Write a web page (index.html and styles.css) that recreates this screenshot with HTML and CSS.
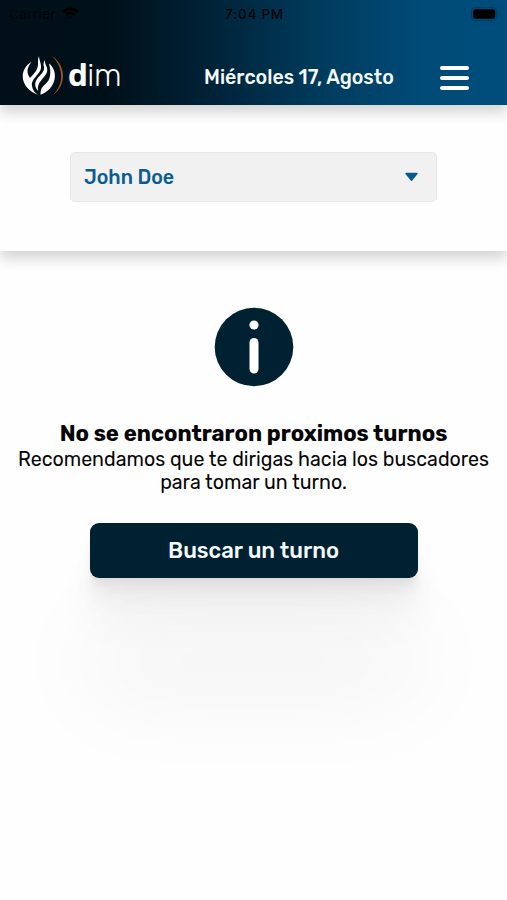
FILE: index.html
```html
<!DOCTYPE html>
<html lang="es">
<head>
<meta charset="utf-8">
<title>dim - Turnos</title>
<link rel="stylesheet" href="styles.css">
</head>
<body>
<header class="header">
  <div class="status">
    <div class="carrier"><span>Carrier</span>
      <svg width="17" height="13" viewBox="0 0 17 13"><path d="M.5 4C5-.8 12-.8 16.500 4L14.700 5.900C11 2.200 6 2.200 2.300 5.900ZM3.400 7C6.300 4 10.700 4 13.600 7L11.800 8.900C9.800 7 7.200 7 5.200 8.900ZM6.200 10C7.500 8.700 9.500 8.700 10.800 10L8.500 12.400Z"/></svg>
    </div>
    <time class="clock">7:04 PM</time>
    <svg class="battery" width="29" height="14" viewBox="0 0 29 14"><rect x=".6" y=".6" width="25" height="12.800" rx="4" fill="none" stroke="#003d63" stroke-width="1.200"/><rect x="2.200" y="2.200" width="22" height="9.600" rx="2.300"/><path d="M27 5Q29 7 27 9Z" fill="#003d63"/></svg>
  </div>
  <div class="bar">
    <div class="logo">
      <svg width="42" height="42" viewBox="0 0 42 42">
        <g fill="#fff">
          <path d="M9.500 7C4.500 13 4.500 18 8 23C11.500 19 16.500 15 16 8Q15.500 4 17 1C17 6 20.500 10 18.500 15C16.500 20 8.500 25 10 31C10.500 35 13 38 16 39.700C8 37 .5 30 .7 21C1 15 4 10 9.500 7Z"/>
          <path d="M23 5C22 9 26.500 12 25 17C23 23 14.500 27 16 36C11 30 13.500 25 17.500 21C21.500 17 23 14 21.500 10Q21 7 23 5Z"/>
          <path d="M27 8.500C36 15 36 33 18.500 39.800C18.500 34 20 32 23.500 29C28.500 25 29.500 18 27 8.500Z"/>
        </g>
        <path d="M30 1C45 11 44 31 31 40C42 29 42 13 30 1Z" fill="#9a541c"/>
      </svg>
      <span class="wordmark"><b>d</b>im</span>
    </div>
    <h1 class="date">Miércoles 17, Agosto</h1>
    <button class="menu" aria-label="Menú"><i></i><i></i><i></i></button>
  </div>
</header>
<section class="picker">
  <button class="select"><span>John Doe</span>
    <svg width="15" height="10" viewBox="0 0 15 10"><path d="M2 1.500H13L7.500 8.300Z" fill="#075b91" stroke="#075b91" stroke-width="1.400" stroke-linejoin="round"/></svg>
  </button>
</section>
<main class="content">
  <svg class="info" width="80" height="80" viewBox="0 0 80 80"><circle cx="40" cy="40" r="39.300" fill="#002132"/><circle cx="40" cy="18" r="4.600" fill="#fff"/><rect x="35.500" y="31" width="9" height="35.500" rx="4.500" fill="#fff"/></svg>
  <h2 class="title">No se encontraron proximos turnos</h2>
  <p class="message">Recomendamos que te dirigas hacia los buscadores<br>para tomar un turno.</p>
  <button class="action">Buscar un turno</button>
</main>
</body>
</html>
```
FILE: styles.css
```css
* { box-sizing: border-box; }
body {
  margin: 0;
  height: 900px;
  overflow: hidden;
  background: #fefefe;
  color: #050505;
  font-family: Rubik, Roboto, sans-serif;
}
button { border: 0; padding: 0; font: inherit; }
svg { display: block; flex: none; }
.header {
  position: relative;
  z-index: 2;
  height: 105px;
  background: linear-gradient(90deg, #000f18 0%, #001019 21%, #002338 42%, #003a5b 62%, #004b78 83%, #004d7b 100%);
  box-shadow: 0 8px 12px rgba(0, 0, 0, .16);
}
.status {
  display: grid;
  grid-template-columns: 1fr auto 1fr;
  align-items: center;
  height: 27px;
  padding: 0 7px 0 9px;
  font: 13.500px Inter, sans-serif;
  color: #000406;
}
.carrier { display: flex; align-items: center; gap: 6px; letter-spacing: .35px; }
.clock { font-weight: 500; letter-spacing: .75px; }
.battery { justify-self: end; }
.bar { display: flex; align-items: center; height: 78px; padding: 22px 37px 0 22px; }
.logo { display: flex; align-items: center; width: 182px; height: 44px; margin-top: -2px; }
.wordmark {
  margin: -1px 0 0 4px;
  color: #fff;
  font: 300 31.500px/40px Rubik, Lato, sans-serif;
  letter-spacing: -.3px;
}
.wordmark b { font-weight: 600; }
.date {
  flex: 1;
  margin: 1px 0 0;
  color: #f3f9fc;
  font-size: 19.600px;
  font-weight: 500;
  white-space: nowrap;
}
.menu { display: flex; flex-direction: column; gap: 6px; width: 31px; margin-top: 1px; background: none; }
.menu i { height: 4px; border-radius: 3px; background: #fff; margin: 0 1px; }
.picker {
  position: relative;
  z-index: 1;
  height: 146px;
  padding: 47px 70px 0;
  background: #fefefe;
  box-shadow: 0 8px 12px rgba(0, 0, 0, .16);
}
.select {
  display: flex;
  align-items: center;
  justify-content: space-between;
  width: 367px;
  height: 50px;
  padding: 0 17px 0 13px;
  border: 1px solid #e7e7e7;
  border-radius: 5px;
  background: #f1f1f1;
  color: #0b5d91;
  font-size: 19.600px;
  font-weight: 500;
}
.content { display: flex; flex-direction: column; align-items: center; padding-top: 56px; }
.title { margin: 34px 0 0; font-size: 22.050px; line-height: 26px; font-weight: 700; white-space: nowrap; }
.message { margin: 1px 0 0; font-size: 19.600px; line-height: 23px; text-align: center; white-space: nowrap; }
.action {
  width: 328px;
  height: 55px;
  margin-top: 29px;
  border-radius: 9px;
  background: #002132;
  color: #f3f9fc;
  font-size: 22.100px;
  font-weight: 500;
  box-shadow:
    0 3px 2px rgba(0, 0, 0, .02),
    0 7px 5px rgba(0, 0, 0, .025),
    0 13px 10px rgba(0, 0, 0, .03),
    0 24px 20px rgba(0, 0, 0, .035),
    0 45px 42px rgba(0, 0, 0, .035),
    0 110px 100px rgba(0, 0, 0, .065);
}
```
